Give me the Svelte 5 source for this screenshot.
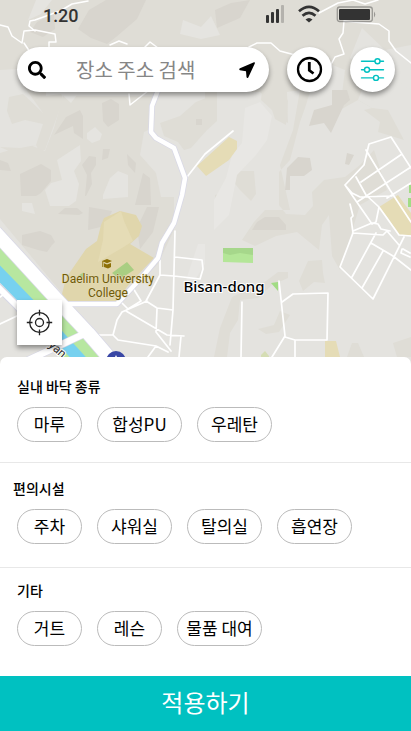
<script>
  const groups = $state([
    {
      id: 'floor',
      title: '실내 바닥 종류',
      chips: [
        { label: '마루', size: 'small', on: false },
        { label: '합성PU', size: 'large', on: false },
        { label: '우레탄', size: 'medium', on: false }
      ]
    },
    {
      id: 'amenities',
      title: '편의시설',
      chips: [
        { label: '주차', size: 'small', on: false },
        { label: '샤워실', size: 'medium', on: false },
        { label: '탈의실', size: 'medium', on: false },
        { label: '흡연장', size: 'medium', on: false }
      ]
    },
    {
      id: 'etc',
      title: '기타',
      chips: [
        { label: '거트', size: 'small', on: false },
        { label: '레슨', size: 'small', on: false },
        { label: '물품 대여', size: 'large', on: false }
      ]
    }
  ]);
</script>

<div class="screen">
  <main class="map-area">
    <svg class="map" viewBox="0 0 411 365" preserveAspectRatio="xMidYMax slice" aria-hidden="true">
      <rect width="411" height="365" fill="#e4e3df" />
      <!-- hills -->
      <g fill="#dfddd6">
        <path d="M0 0H411V45L385 50L362 28L350 58L388 85L404 140L378 132L380 122L364 110L372 108L358 100L340 110L345 70L320 60L305 108L300 122L290 160L279 172V205L286 214L305 215L313 206L312 192L324 180L345 177L360 165L374 150L387 190L360 205L340 270L332 256L329 215L322 225L319 250L297 232L276 236L255 246L242 240L254 222L265 210L290 210L280 165L293 130L300 90L287 92L288 123L277 118L268 100L260 92H61L63 100L45 150L39 151L36 145L20 148L9 151L0 147Z" />
        <path d="M9 97L23 94L43 113V124L25 120L12 124L7 111Z" />
        <path d="M63 96H152L152 128L144 132L140 155L156 173L161 197H174V230L158 264L120 298H66L0 219V153L10 150L30 145L45 151L54 128Z" />
        <path d="M160 123L180 116L196 102L206 98V131L191 148L184 150L178 142L164 136Z" />
        <path d="M205 92H217V121L205 132Z" />
        <path d="M262 92H283L288 101L286 125L275 119L272 110L261 100Z" />
        <path d="M232 175L240 171H254L256 194L251 201L240 190L232 180Z" />
        <path d="M215 195L225 193L228 201H215Z" />
        <path d="M308 261L322 260L323 273L325 283L314 282L303 291L299 281Z" />
        <path d="M266 281L278 272L288 272V278L272 285L258 298L240 300L238 320L230 333L227 357H214L220 328L232 297Z" />
        <path d="M258 329L274 325L280 311L290 315L279 332L266 334Z" />
        <path d="M347 357L352 343H358L364 357ZM393 343L411 337V357H397Z" />
      </g>
      <path d="M0 70L17 69L25 88L43 113V124L36 145L20 148L0 147ZM372 108L358 100L364 84L388 74L411 90V140L404 140L388 110Z" fill="#e4e3df" />
      <g fill="#d8d5ce">
        <path d="M89 10L106 0H146L137 19L116 37L107 44L91 38L78 29Z" />
        <path d="M37 22L54 13L55 29L43 37L30 32Z" />
        <path d="M215 10L231 3L250 0L240 18L217 28Z" />
        <path d="M309 126L314 110L332 105V90H347L350 100L344 105L331 133L324 123L314 125Z" />
        <path d="M102 103L111 99L119 104V120L108 127L103 121Z" />
        <path d="M54 135L66 117L80 110L83 116V139L74 133L73 126Z" />
        <path d="M20 174L41 164L51 170L51 181L41 193L36 196H21Z" />
        <path d="M82 165L89 156L96 157V165L91 173L92 184L86 196H85L87 175Z" />
        <path d="M103 149H110L108 158L102 160ZM127 154L136 163L135 173L128 165ZM0 160L8 163L11 171L0 170Z" />
        <path d="M287 168L298 157L310 158L312 170L304 176H290L290 190L285 190Z" />
        <path d="M347 153L354 155L349 165L345 164ZM196 119H202V125H196Z" />
        <path d="M143 173L150 178L151 205H135ZM58 214L65 208H77L83 213L79 215Z" />
        <path d="M257 222L265 217H279L286 225V230H252Z" />
        <path d="M89 207L112 211L105 226L88 230ZM147 207H159L153 232L140 249L137 228Z" />
        <path d="M22 235L40 231L51 235L55 242L52 245L47 252L38 250L22 245Z" />
      </g>
      <g fill="#e5e4e0">
        <path d="M46 60L54 66L80 76L77 95L71 103L61 94L46 96ZM87 133L95 127L102 134L100 140L92 143L87 139Z" />
        <path d="M57 160L80 145L81 161L74 171L79 184L76 201L69 206H50L45 190L51 183L62 180Z" />
        <path d="M103 195L110 178L118 171L128 175V197L103 199ZM22 203L32 203L35 214L22 211Z" />
        <path d="M36 0H52L41 14L28 20ZM183 20L201 27L211 16L220 35L201 39L180 34Z" />
      </g>
      <path d="M9 97L23 94L43 113V124L25 120L12 124L7 111Z" fill="#dfddd6" />
      <g fill="#e8e7e4">
        <path d="M245 108L260 102L272 116L267 140L256 155L237 175L229 215L214 230V200L226 178L232 155L242 143Z" />
        <path d="M198 244H205V264L190 288H184L188 274Z" />
      </g>
      <!-- campus and parks -->
      <path d="M101 225L104 218L120 211L136 215L142 226L139 236L130 244L154 258L130 283L114 304L66 304L62 294L66 278L86 249L97 241Z" fill="#e0d6ac" />
      <path d="M104 222L121 211L124 221L133 241L122 248L98 262L103 240Z" fill="#e5dcb6" />
      <path d="M112 273L127 262L134 270L120 279ZM78 276L84 272L85 281Z" fill="#a9ce82" />
      <path d="M197 166L229 137L237 141V149L229 160L206 176Z" fill="#e5dcb6" />
      <path d="M379 207L398 195L411 213V235H399L388 218Z" fill="#e5dcb6" />
      <path d="M325 341H336L342 365H325Z" fill="#e5dcb6" />
      <path d="M223 248H253V263L223 262Z" fill="#b4e698" />
      <path d="M223 248H253V255L240 253L230 255L223 253Z" fill="#a6d78b" />
      <path d="M271 283L278 282V291ZM409 185H411V193H409ZM408 198H411V207H408Z" fill="#a2dc85" />
      <path d="M261 355L265 351L269 356V362H261Z" fill="#d5ddb4" />
      <!-- river -->
      <path d="M-5 250L45 303L102 365" fill="none" stroke="#b7e7a0" stroke-width="20" />
      <path d="M40 320L74 360" fill="none" stroke="#b7e7a0" stroke-width="18" />
      <path d="M-5 269L35 310L85 365" fill="none" stroke="#77d1ef" stroke-width="12" />
      <path d="M-5 284L17 306L34 325" fill="none" stroke="#d8d8e6" stroke-width="8" />
      <path d="M-5 284L17 306L34 325" fill="none" stroke="#fff" stroke-width="6" />
      <!-- minor streets -->
      <g fill="none" stroke="#fff" stroke-width="1.5" stroke-linejoin="round" stroke-linecap="round">
        <path d="M0 25L8 27L12 36L22 43L24 31L35 30L55 34L56 42L49 42V48M24 43L30 52M35 31L29 26L30 21L35 20L60 11L72 4L88 1M110 45L119 41L127 44M142 50L150 42L158 48M129 94L130 105L153 87" />
        <path d="M249 47L257 43L271 43L280 51L295 55M411 63L396 51L389 41V31L379 24L353 22L344 21L343 33L339 39L344 54L335 57L329 68M319 13L338 3L353 0L365 4L378 0" />
      </g>
      <g fill="none" stroke="#fff" stroke-width="1.700" stroke-linejoin="round" stroke-linecap="round">
        <path d="M187 177L205 154L233 131" />
        <path d="M369 144L391 137L411 168M369 144L364 165L345 185L372 224L376 222L379 207M366 150L390 190L411 222M356 177L366 195L379 207L399 235L411 236M361 182L402 154M357 202L411 167M387 198L411 183M345 185L352 193L360 197L392 196" />
        <path d="M350 204L353 216L351 218L353 233M353 231L372 223L378 224L381 229L390 231M353 233L340 267L373 299L404 237M353 233L383 235L387 231L399 245M352 277L376 233M362 288L383 251M371 243L393 256L411 270M403 249L410 253M402 249L401 253L410 257" />
        <path d="M279 281L285 336L272 357M282 302L293 294L328 293L327 340H295L285 337M295 341V357M242 302L241 357" />
        <path d="M175 231L173 310L170 345M175 257L202 260L203 269L200 279L174 276L160 275V260M160 275L146 301L157 308L173 310M157 309L156 332L171 351M126 311L167 335L184 336M147 301L122 312L117 320L113 335H98M113 335L118 340L156 346L148 357M156 346L168 352M133 288L141 301L128 309L119 300M181 336L179 357" />
        <path d="M0 324L19 315M0 297L6 293" />
      </g>
      <!-- main roads -->
      <g fill="none" stroke-linejoin="round">
        <path d="M160 85L152 106L151 132L156 138L174 148L185 178L182 195L174 223L162 243L158 258L142 277L117 304H66" stroke="#d8d8e6" stroke-width="6" />
        <path d="M-5 232L60 303L88 333L118 368" stroke="#d8d8e6" stroke-width="15" />
        <path d="M20 364L84 334" stroke="#d8d8e6" stroke-width="8" />
        <path d="M160 85L152 106L151 132L156 138L174 148L185 178L182 195L174 223L162 243L158 258L142 277L117 304H66" stroke="#fff" stroke-width="4.500" />
        <path d="M-5 232L60 303L88 333L118 368" stroke="#fff" stroke-width="13.500" />
        <path d="M20 364L86 333" stroke="#fff" stroke-width="6.500" />
      </g>
      <circle cx="116" cy="361" r="10" fill="#3947a5" />
      <path d="M114 359L116 355L118 359Z" fill="#fff" />
      <!-- campus marker -->
      <g fill="#8d7008">
        <path d="M102 261L107 259L112 261L107 263.200ZM102.300 261H103.300V267H102.300Z" />
        <path d="M104 263.200L107 264.600L111 263V267L108 268.500L104 267Z" />
      </g>
      <g class="campus-name" text-anchor="middle">
        <text x="108" y="283">Daelim University</text>
        <text x="108" y="297">College</text>
      </g>
      <text class="district" x="224" y="292" text-anchor="middle">Bisan-dong</text>
      <text class="road-name" transform="translate(48 346) rotate(42)">yan</text>
    </svg>

    <div class="status">
      <span class="time">1:20</span>
      <svg width="111" height="20" viewBox="265 4 111 20" aria-hidden="true">
        <g fill="#333">
          <rect x="266" y="15" width="3" height="8" rx="1" />
          <rect x="271" y="12" width="3" height="11" rx="1" />
          <rect x="276" y="9" width="3" height="14" rx="1" />
          <rect x="281" y="5" width="3" height="18" rx="1" opacity=".25" />
          <path d="M305.500 19.500Q309 16.500 312.500 19.500L309 22.500Z" />
          <rect x="339" y="9" width="31" height="11" rx="1" />
          <path d="M374 11.500Q376.500 14.500 374 17.500Z" opacity=".4" />
        </g>
        <path d="M299 11.200Q309 2.500 319 11.200M302.500 15.800Q309 10 315.500 15.800" fill="none" stroke="#333" stroke-width="2.700" />
        <rect x="337.300" y="7" width="35" height="14.500" rx="2.500" fill="none" stroke="#333" stroke-opacity=".4" stroke-width="1.300" />
      </svg>
    </div>

    <div class="toolbar">
      <form class="search" onsubmit={(e) => e.preventDefault()}>
        <button type="submit" aria-label="검색">
          <svg width="18" height="18" viewBox="0 0 512 512"><path d="M505 442.700L405.300 343c-4.500-4.500-10.600-7-17-7H372c27.600-35.300 44-79.700 44-128C416 93.100 322.900 0 208 0S0 93.100 0 208s93.100 208 208 208c48.300 0 92.700-16.400 128-44v16.300c0 6.400 2.500 12.500 7 17l99.700 99.700c9.400 9.400 24.600 9.400 33.900 0l28.300-28.300c9.400-9.400 9.400-24.600.1-34zM208 336c-70.700 0-128-57.200-128-128 0-70.700 57.200-128 128-128 70.700 0 128 57.200 128 128 0 70.700-57.200 128-128 128z" /></svg>
        </button>
        <input type="text" placeholder="장소 주소 검색" aria-label="장소 주소 검색" />
        <button type="button" aria-label="현재 위치">
          <svg width="16" height="16" viewBox="0 0 16 16"><path d="M15 .2Q16.300 0 15.800 1.400L9.300 15.400Q8 16.700 7.500 14.900L7 9.300L.9 8.200Q-.5 7.200 1 6.200Z" /></svg>
        </button>
      </form>
      <button class="round" type="button" aria-label="시간">
        <svg width="27" height="27" viewBox="0 0 27 27" fill="none" stroke="#000">
          <circle cx="13.500" cy="13.500" r="11.500" stroke-width="2.300" />
          <path d="M13.300 6V14.300L17.500 17.500" stroke-width="2.800" />
        </svg>
      </button>
      <button class="round" type="button" aria-label="필터">
        <svg width="25" height="25" viewBox="0 0 25 25" fill="#fff" stroke="#00c1c1" stroke-width="1.400" stroke-linecap="round">
          <path d="M1.500 4.300H23.500M1.500 12.700H23.500M1.500 20.900H23.500" />
          <circle cx="17.500" cy="4.300" r="2.500" />
          <circle cx="7" cy="12.700" r="2.500" />
          <circle cx="16" cy="20.900" r="2.500" />
        </svg>
      </button>
    </div>

    <button class="locate" type="button" aria-label="내 위치로 이동">
      <svg width="27" height="27" viewBox="0 0 27 27" fill="none" stroke="#222" stroke-width="1.300">
        <circle cx="13.500" cy="13.500" r="9.800" />
        <circle cx="13.500" cy="13.500" r="4" />
        <path d="M13.500 .8V6.500M13.500 20.500V26.200M.8 13.500H6.500M20.500 13.500H26.200" />
      </svg>
    </button>
  </main>

  <div class="sheet">
    {#each groups as group (group.id)}
      <section class={group.id} aria-labelledby={group.id}>
        <h2 id={group.id}>{group.title}</h2>
        <div class="chips">
          {#each group.chips as chip (chip.label)}
            <button
              type="button"
              class={['chip', chip.size]}
              aria-pressed={chip.on}
              onclick={() => (chip.on = !chip.on)}>{chip.label}</button>
          {/each}
        </div>
      </section>
    {/each}
  </div>

  <button class="apply" type="button">적용하기</button>
</div>

<style>
  :global(body) {
    margin: 0;
  }

  .screen {
    display: flex;
    flex-direction: column;
    min-height: 100vh;
    font-family: "Noto Sans CJK KR", "Noto Sans", sans-serif;
    color: #000;
    background: #fff;
  }

  button {
    display: flex;
    align-items: center;
    justify-content: center;
    padding: 0;
    border: 0;
    background: none;
    font-family: inherit;
    color: inherit;
    cursor: pointer;
  }

  .map-area {
    position: relative;
    flex: 1;
    display: flex;
    flex-direction: column;
    min-height: 240px;
    margin-bottom: -8px;
    padding-bottom: 20px;
    box-sizing: border-box;
  }

  .map {
    position: absolute;
    inset: 0;
    width: 100%;
    height: 100%;
  }

  .campus-name {
    font: 400 12px/14px Roboto, sans-serif;
    fill: #6f5a08;
    stroke: #e5dcb6;
    stroke-width: 1px;
    paint-order: stroke;
  }

  .district {
    font: 500 15px/20px "Noto Sans", sans-serif;
    fill: #000;
    stroke: #fff;
    stroke-width: 2px;
    paint-order: stroke;
  }

  .road-name {
    font: 400 12px/14px Roboto, sans-serif;
    fill: #333;
    stroke: #fff;
    stroke-width: 2px;
    paint-order: stroke;
  }

  .status {
    position: relative;
    display: flex;
    align-items: flex-start;
    justify-content: space-between;
    height: 43px;
    padding: 4px 35px 0 43px;
  }

  .time {
    font: 500 18px/24px Roboto, sans-serif;
    color: #333;
  }

  .toolbar {
    position: relative;
    display: flex;
    gap: 18px;
    padding: 0 16px 0 17px;
  }

  .search {
    flex: 1;
    display: flex;
    align-items: center;
    min-width: 0;
    height: 45px;
    padding: 0 14px 0 11px;
    box-sizing: border-box;
    border-radius: 23px;
    background: #fff;
    box-shadow: 0 3px 5px rgba(0, 0, 0, 0.4);
  }

  .search input {
    flex: 1;
    min-width: 0;
    padding: 0 0 0 30px;
    border: 0;
    outline: 0;
    background: none;
    font: 400 20px/30px "Noto Sans CJK KR", "Noto Sans", sans-serif;
    color: #000;
  }

  .search input::placeholder {
    color: #868686;
    opacity: 1;
  }

  .round {
    flex: none;
    width: 45px;
    height: 45px;
    border-radius: 50%;
    background: #fff;
    box-shadow: 0 3px 5px rgba(0, 0, 0, 0.4);
  }

  .locate {
    position: relative;
    width: 45px;
    height: 45px;
    margin: auto 0 0 17px;
    background: #fff;
    box-shadow: 0 3px 5px rgba(0, 0, 0, 0.4);
  }

  .sheet {
    position: relative;
    border-radius: 7px 7px 0 0;
    background: #fff;
  }

  section {
    padding: 20px 17px;
    border-bottom: 1px solid #e8e8e8;
  }

  .amenities {
    padding: 16px 17px 23px 13px;
  }

  .amenities .chips {
    padding-left: 4px;
  }

  .etc {
    padding: 13px 17px 30px;
    border-bottom: 0;
  }

  h2 {
    margin: 0 0 12px;
    font-size: 14px;
    line-height: 18px;
    font-weight: 500;
  }

  .chips {
    display: flex;
    flex-wrap: wrap;
    gap: 15px;
  }

  .chip {
    height: 35px;
    padding-bottom: 2px;
    box-sizing: border-box;
    border: 1px solid #bbb;
    border-radius: 18px;
    background: #fff;
    font-size: 17px;
    line-height: 24px;
    white-space: nowrap;
  }

  .small {
    width: 65px;
  }

  .medium {
    width: 75px;
  }

  .large {
    width: 85px;
  }

  .chip[aria-pressed='true'] {
    border-color: #00c1c1;
    color: #00a3a3;
  }

  .apply {
    height: 55px;
    padding-bottom: 4px;
    box-sizing: border-box;
    background: #00c1c1;
    color: #fff;
    font-size: 24px;
    line-height: 36px;
  }
</style>
